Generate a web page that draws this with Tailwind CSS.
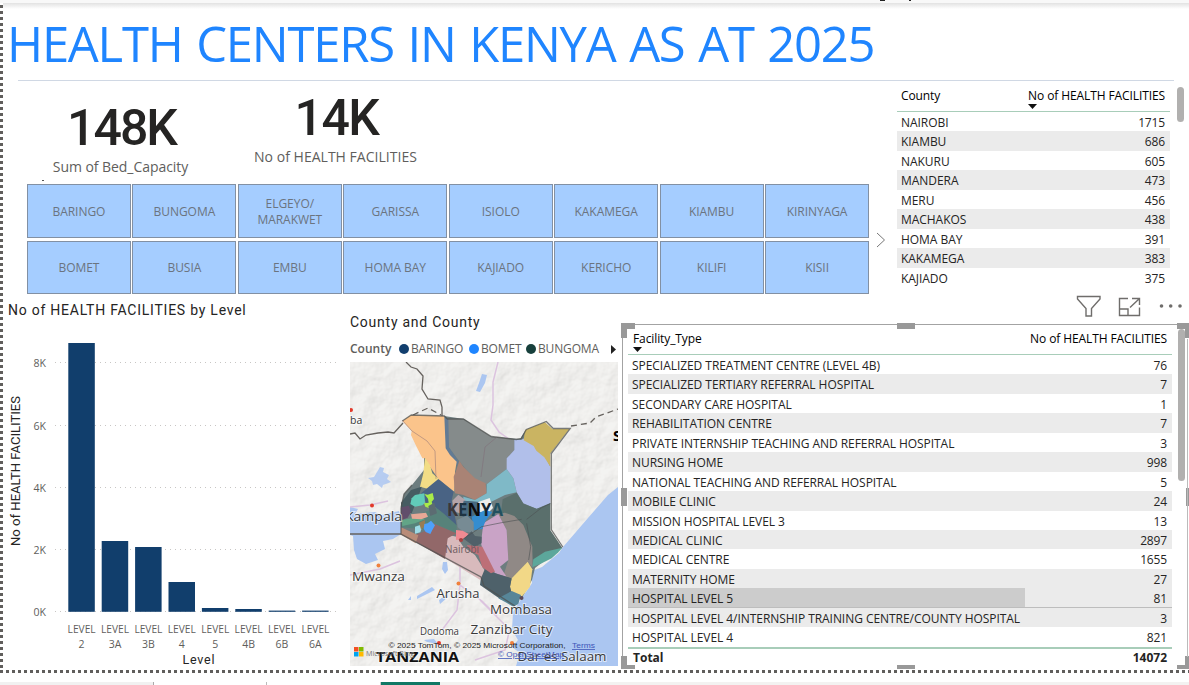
<!DOCTYPE html>
<html lang="en">
<head>
<meta charset="utf-8">
<title>Health Centers in Kenya</title>
<script src="https://cdn.jsdelivr.net/npm/@tailwindcss/browser@4"></script>
</head>
<body class="bg-white font-['Open_Sans',sans-serif] text-[#252423]">
<div class="relative flex h-[685px] w-[1189px] flex-col overflow-hidden bg-white">
  <!-- ribbon edge -->
  <div class="flex h-[3px] shrink-0 bg-[#f8f8f8]"><i class="ml-[880px] h-px w-[5px] bg-[#222]"></i><i class="ml-[24px] h-px w-[2px] bg-[#222]"></i></div>

  <!-- report canvas -->
  <main class="flex h-[667px] shrink-0">
    <div class="mt-[2px] w-[3px] shrink-0 bg-[repeating-linear-gradient(180deg,#605e5c_0_3px,#fff_3px_6px)]"></div>
    <div class="flex w-[1186px] flex-col">
      <div class="h-[6px] shrink-0 bg-linear-to-b from-[#e2e2e2] to-white"></div>
      <h1 class="h-[71px] shrink-0 pl-[4px] text-[49px] leading-[69px] whitespace-nowrap tracking-[-1.25px] [word-spacing:2.2px] text-[#1f85ff]">HEALTH CENTERS IN KENYA AS AT 2025</h1>
      <div class="ml-[15px] h-px w-[1156px] shrink-0 bg-[#d0d8e4]"></div>

      <section class="flex h-[214px] shrink-0">
        <div class="w-[866px] shrink-0 pl-[24px]">
          <div class="flex h-[103px]">
            <div class="flex w-[187px] flex-col items-center pt-[18px]">
              <div class="pl-[2px] text-[50px] leading-[58px] font-medium tracking-[-2px] font-[Roboto,sans-serif]">148K</div>
              <div class="text-[14px] leading-[20px] whitespace-nowrap tracking-[-0.05px] text-[#605e5c] [font-stretch:93%]">Sum of Bed_Capacity</div>
              <i class="mt-[3px] -ml-[156px] h-px w-[2px] bg-[#555]"></i>
            </div>
            <div class="flex w-[243px] flex-col items-center pt-[8px]">
              <div class="pl-[2px] text-[50px] leading-[58px] font-medium tracking-[-1.5px] font-[Roboto,sans-serif]">14K</div>
              <div class="text-[14px] leading-[20px] whitespace-nowrap tracking-[0.02px] text-[#605e5c] [font-stretch:93%]">No of HEALTH FACILITIES</div>
            </div>
          </div>
          <div id="slicer" class="grid h-[110px] w-[842px] grid-cols-8 grid-rows-2 gap-x-[1.6px] gap-y-[3px]"></div>
        </div>
        <div class="w-[28px] shrink-0 pt-[151px] pl-[7px]">
          <svg class="block h-[16px] w-[10px]" viewBox="0 0 10 16" fill="none" stroke="#777"><path d="M1 1l7.500 7-7.500 7"/></svg>
        </div>
        <div class="w-[273px] shrink-0">
          <div class="flex h-[31px] border-b border-[#a8cdb9] text-[12px] leading-[30px] tracking-[-0.1px] text-black [font-stretch:93%]">
            <div class="w-[127px] pl-[4px]">County</div>
            <div class="relative grow pr-[5px] text-right whitespace-nowrap">No of HEALTH FACILITIES
              <svg class="absolute top-[23px] left-[4px] h-[5px] w-[9px]" viewBox="0 0 9 5"><path d="M0 0h9L4.500 5z" fill="#111"/></svg>
            </div>
          </div>
          <div id="counties"></div>
        </div>
        <div class="mt-[6px] ml-[7px] h-[35px] w-[7px] rounded-full bg-[#b1b0af]"></div>
      </section>

      <section class="flex h-[375px] shrink-0">
        <!-- column chart -->
        <div class="w-[347px] shrink-0 pl-[5px]">
          <h2 class="pt-[6px] text-[14px] leading-[18px] whitespace-nowrap tracking-[0.76px] font-[Roboto,sans-serif] [font-stretch:90%]">No of HEALTH FACILITIES by Level</h2>
          <svg id="chart" class="block h-[350px] w-[340px]" viewBox="8 319 340 350"></svg>
        </div>
        <!-- map -->
        <div class="w-[268px] shrink-0">
          <h2 class="pt-[18px] text-[14px] leading-[18px] tracking-[0.75px] font-[Roboto,sans-serif] [font-stretch:90%]">County and County</h2>
          <div class="mt-[8px] flex h-[20px] items-center text-[12px] whitespace-nowrap tracking-[-0.15px] text-[#605e5c] [font-stretch:93%]">
            <b class="w-[49px] font-semibold tracking-normal">County</b>
            <span class="flex w-[70px] items-center gap-[2px]"><i class="size-[10px] rounded-full bg-[#123f6e]"></i>BARINGO</span>
            <span class="flex w-[57px] items-center gap-[2px]"><i class="size-[10px] rounded-full bg-[#1f85ff]"></i>BOMET</span>
            <span class="flex w-[85px] items-center gap-[2px]"><i class="size-[10px] rounded-full bg-[#17403c]"></i>BUNGOMA</span>
            <svg class="h-[9px] w-[5px]" viewBox="0 0 5 9"><path d="M0 0l5 4.500L0 9z" fill="#222"/></svg>
          </div>
          <svg class="mt-[3px] block h-[304px] w-[268px]" viewBox="350 362 268 304" font-family="Open Sans, sans-serif">
            <defs>
              <filter id="relief" x="0" y="0" width="100%" height="100%"><feTurbulence type="fractalNoise" baseFrequency=".05" numOctaves="4" seed="6"/><feDiffuseLighting surfaceScale="1.600" lighting-color="#f3f3f3" diffuseConstant="1.120" color-interpolation-filters="sRGB"><feDistantLight azimuth="225" elevation="62"/></feDiffuseLighting></filter>
            </defs>
            <rect x="350" y="362" width="268" height="304" fill="#efeeeb"/>
            <rect x="350" y="362" width="268" height="304" filter="url(#relief)" opacity=".3"/>
            <!-- water -->
            <g fill="#abc6f1">
              <path d="M618 487L608 495 588 518 563 547 559 553 542 567 532 571 532 583 522 598 513 612 512 630 518 640 512 647 520 653 516 666H618z"/>
              <path d="M350 507l8 2-3 5 20-2 6 3 18-4 2 8v15l-8 5-10 2 2 8-10 5 3 6-12 4-9-5-3-9-1-14-3-1z"/>
              <path d="M482 374l5 1-2 8-5 9-4-1 3-8z"/>
              <path d="M368 478l6-1 3-5 3-5 4 1-1 4 6 3-2 4 4 3-8 3-1 3-5-4-4 1-1-4z" opacity=".85"/>
              <path d="M443 562l4 0 1 8-3 4-3-5zM417 596l15-9 3 3-18 9zM439 600l8-6 1 3-8 7zM424 640l10-1 4 5-11-2zM408 600l3-4 0 4z"/>
            </g>
            <!-- roads -->
            <g fill="none" stroke="#dcc3df" stroke-width="1.500">
              <path d="M498 362l-5 20 0 23-2 15 8 12 10 7M460 535v50l22 16 15 15M350 507l20-2 18-4M350 575l30-6 20-8M460 585l-3 25-15 20M510 628l-5 22-30 10M480 600l28 28"/>
            </g>
            <!-- surrounding borders -->
            <g fill="none" stroke="#66625e" stroke-width="1.300">
              <path d="M406 362l5 5 6 2 6 7-1 13 6 10 12 1 2 7 0 9M350 434l5-1 5 6 6-4 12-2 10-1 6 1 9-10M350 534h51"/>
              <path d="M413 415l15-7 13 7M571 426l19-3 6-6 22-8" stroke-dasharray="6 4"/>
            </g>
            <!-- country base -->
            <path d="M403 421L411 416 444 416 464 419 490 437 520 439 525 431 545 423 552 429 568 429 550 454 550 531 561 548 535 568 532 580 522 598 505 595 482 578 401 534 401 508 404 494 412 485 424 470 424 452 412 430z" fill="#6d7d7f"/>
            <!-- counties -->
            <g transform="translate(395 405) scale(.33333)">
              <path fill="#858b8b" d="M158 42h47l85 53 55 5 13 3v32l-23 25 3 30-63 48-25-3-40-45-20-25-30-40z"/>
              <path fill="#627b95" d="M146 33l14 10 2 84 30 45-10 12-32-52z"/>
              <path fill="#fbc48b" d="M22 48L48 30l100 3 4 97 13 20 20 20-5 30-2 60-48-38-25-37-15-25-8 0-20-40-14-30 2-12z"/>
              <path fill="#f2dd86" d="M90 158l15 22 7 25 23 20-35 27-25-7 10-40z"/>
              <path fill="#a98375" d="M193 167l12 18 35 35 32 15 3 30-35 20-35-15-25-5-4-50 8-20z"/>
              <path fill="#7fb9c7" d="M275 238l60-46 20 28 10 42-35 8-50 25-75-8 0-12 35 10 35-20z"/>
              <path fill="#b1bfea" d="M358 103l20 2 10-5 52 32 26 53v112l-41 15-40-17-20-33-10-42-20-28v-32l23-25z"/>
              <path fill="#cab462" d="M386 106l4-31 60-23 22 20 51 0-57 73v40l-18-28-24-20-8-14z"/>
            </g>
            <g transform="translate(395 480) scale(.33333)">
              <path fill="#5a6f6c" d="M318 100l5-42 42-20 20 33 40 15 41-17v82l36 53-88 37-4-35-25-65-35-35-30-4z"/>
              <path fill="#908986" d="M310 102l20-4 28 10 27 27 27 65v62l-14-17-48 50-25-7 15-48-5-90z"/>
              <path fill="#c9a3c6" d="M265 130l45-28 25 48 5 90-25 20 20 30-35-10-30-40-12-50z"/>
              <path fill="#5ca79b" d="M415 238l35-23 52-12-12 14-20 18-30 15-28 12z"/>
              <path fill="#f2d887" d="M398 245l14 23-7 52-25 30-30-10-5-20 5-25z"/>
              <path fill="#4e616a" d="M258 290l12-22 40 15 40 12-5 25 5 20-30 20-65-45z"/>
              <path fill="#578698" d="M310 355l40-22 28 12-8 27-15 8z"/>
              <path fill="#d8babc" d="M150 200l10-35 25 5 20 30 35 25 28 45-12 30-106-65z"/>
              <path fill="#bd6f77" d="M215 195l47 5 38 75-12 5-26-18-12-37-20-10z"/>
              <path fill="#926869" d="M60 165l40-15 15-20 35 15 35 15-27 15-8 62-90-52z"/>
              <path fill="#b98c78" d="M18 142l52 24-8 24-44-26z"/>
              <path fill="#57827a" d="M20 122l30-7 40-20 45-15 50 55v25l-35-15-35-15-25 18-72-6z"/>
              <path fill="#62a587" d="M20 120l45-8 25 6-30 12-38 8z"/>
              <path fill="#496384" d="M78 40L130-3l46 38-6 26 15 75-40-36-25-20-20 0z"/>
              <path fill="#465c62" d="M18 68L48 30l32-10-10 30-20 50-32-8z"/>
              <path fill="#61cbb9" d="M50 55l10-10 28-5 2 28-8 8-22 4-14-8z"/>
              <path fill="#a9ec49" d="M88 42l10 2 15-5 4 18-7 8 3 10 5 20-8 3-9-14-10-4-4-10 14-2-2-12z"/>
              <path fill="#614e6b" d="M18 82l24-5 6 18-10 18-20 8z"/>
              <path fill="#e7a896" d="M48 103l45-5 6 12-20 8-28-2z"/>
              <path fill="#9ddbe6" d="M60 140l24-8-8 25-16 4z"/>
              <path fill="#977c54" d="M72 128l18-8 0 20-12 8z"/>
              <path fill="#4ea1fb" d="M88 132l10-2 10-8 12 14-8 14-6 12-14-6-6-10z"/>
              <path fill="#5c6c72" d="M100 78l18-10 8 32-20 8z"/>
              <path fill="#b5a4a9" d="M172 62l18-18 18 14 20 30-20 16-32-10z"/>
              <path fill="#496a80" d="M206 62l50 4 10 36-30 24-40-20z"/>
              <path fill="#eeeeec" d="M250 66l34-12 10 30-20 20-24-10z"/>
              <path fill="#348dd0" d="M230 110l40-20 22 6-20 26-10 25-25 4z"/>
              <path fill="#778b94" d="M186 120l30-14 20 20 0 30-30 0-18-14z"/>
              <path fill="#f08a92" d="M183 150l20 2 18 10-12 14-26 4z"/>
              <path fill="#516069" d="M206 176l24-22 10 14 20 2 0 20-22 10z"/>
              <path fill="none" stroke="#4c5053" stroke-width="3" opacity=".6" d="M200 180l60-40 60-12 60-10M395 130l12 70-6 40M395 118l45-35 26-12"/>
            </g>
            <path d="M402.300 421l9-6 33 1 3 3h16l28 17.500 25 3 5-1 5-9 20-8 7 7h17l-19 25v76l11.500 17.500M401 508l3-14 8-9M401 508v26l80 43 3 9 31 20" fill="none" stroke="#4f5150" stroke-width="1.300" opacity=".75"/>
            <path d="M402 420l10 11 15 10 8 10 1 28M497 437l-12 10-4 30" fill="none" stroke="#7e6674" opacity=".45"/>
            <!-- cities -->
            <g fill="#e2392a"><circle cx="351" cy="410" r="2"/><circle cx="372" cy="505.500" r="2"/><circle cx="461" cy="540" r="2" fill="#a84040"/><circle cx="439" cy="643" r="2"/></g>
            <g fill="#f0803c"><circle cx="378.500" cy="565.500" r="2"/><circle cx="458.500" cy="583.500" r="2"/><circle cx="512" cy="643" r="2"/></g><circle cx="521.500" cy="598" r="2" fill="#5c4a58"/>
            <g fill="#3a3a3a" stroke="#fff" stroke-opacity=".6" stroke-width="2" paint-order="stroke">
              <text x="350" y="424" font-size="10.500">ba</text>
              <text x="345" y="521" font-size="13" textLength="57" lengthAdjust="spacingAndGlyphs">Kampala</text>
              <text x="352" y="581" font-size="12.500" textLength="53" lengthAdjust="spacingAndGlyphs">Mwanza</text>
              <text x="436.500" y="598" font-size="13" textLength="43" lengthAdjust="spacingAndGlyphs">Arusha</text>
              <text x="490" y="613.500" font-size="13" textLength="62" lengthAdjust="spacingAndGlyphs">Mombasa</text>
              <text x="420" y="635" font-size="10" textLength="39" lengthAdjust="spacingAndGlyphs">Dodoma</text>
              <text x="470.500" y="634" font-size="13" textLength="82" lengthAdjust="spacingAndGlyphs">Zanzibar City</text>
              <text x="517.500" y="660.500" font-size="13" textLength="89" lengthAdjust="spacingAndGlyphs">Dar es Salaam</text>
            </g>
            <text x="445" y="553" font-size="10.500" fill="#6d5a5e" textLength="34" lengthAdjust="spacingAndGlyphs">Nairobi</text>
            <g font-weight="700">
              <text x="447" y="515.500" font-size="17.500" textLength="56" lengthAdjust="spacingAndGlyphs"><tspan fill="#3b3638">K</tspan><tspan fill="#1f3442">E</tspan><tspan fill="#0c0c0c">N</tspan><tspan fill="#14242e">Y</tspan><tspan fill="#22505f">A</tspan></text>
              <text x="613" y="441" font-size="15" fill="#000">S</text>
              <text x="376" y="661.500" font-size="14.500" fill="#111" stroke="#fff" stroke-opacity=".5" stroke-width="2" paint-order="stroke" textLength="83" lengthAdjust="spacingAndGlyphs">TANZANIA</text>
            </g>
            <g><path fill="#f25022" d="M354 647h4.500v4.500H354z"/><path fill="#7fba00" d="M359 647h4.500v4.500H359z"/><path fill="#00a4ef" d="M354 652h4.500v4.500H354z"/><path fill="#ffb900" d="M359 652h4.500v4.500H359z"/></g>
            <text x="366" y="655.500" font-size="8" fill="#777" textLength="48" lengthAdjust="spacingAndGlyphs">Microsoft Bing</text>
            <g font-family="Liberation Sans, sans-serif" font-size="7.800">
              <text x="388.500" y="648" fill="#222" textLength="177" lengthAdjust="spacingAndGlyphs">© 2025 TomTom, © 2025 Microsoft Corporation,</text>
              <g fill="#3d55b8" text-decoration="underline"><text x="572" y="648" textLength="23" lengthAdjust="spacingAndGlyphs">Terms</text><text x="498" y="657" textLength="66" lengthAdjust="spacingAndGlyphs">© OpenStreetMap</text></g>
            </g>
          </svg>
        </div>

        <!-- facility type table, selected -->
        <div class="w-[571px] shrink-0 pl-[4px]">
          <div class="flex h-[29px] pl-[454px]">
            <svg class="block h-[28px] w-[112px]" viewBox="1076 295 112 28" fill="none" stroke="#6f6d6b" stroke-width="1.400">
              <path d="M1077.500 296.500h22.500v2.500l-8.500 9.500v7.500h-5.500v-7.500l-8.500-9.500z"/>
              <path d="M1128 298.500h-8.500v17h20v-8M1119.500 309h8.500v6.500M1130 307.500l9.500-9M1132 298.500h7.500v6.500"/>
              <g fill="#6f6d6b" stroke="none"><circle cx="1161.500" cy="306" r="1.800"/><circle cx="1170.700" cy="306" r="1.800"/><circle cx="1180" cy="306" r="1.800"/></g>
            </svg>
          </div>
          <div class="relative h-[345px] w-[566px] border-t border-l border-[#a3a3a3] pt-[4px] pl-[5px]">
            <i class="absolute -top-[2px] -left-[2px] h-[15px] w-[14px] border-t-[6px] border-l-[6px] border-[#999]"></i>
            <i class="absolute -top-[2px] left-[274px] h-[6px] w-[18px] bg-[#999]"></i>
            <i class="absolute -top-[2px] left-[554px] h-[15px] w-[14px] border-t-[6px] border-r-[6px] border-[#999]"></i>
            <i class="absolute top-[163px] -left-[2px] h-[18px] w-[6px] bg-[#999]"></i>
            <i class="absolute top-[163px] left-[563px] h-[18px] w-[6px] bg-[#999]"></i>
            <i class="absolute top-[331px] -left-[2px] h-[13px] w-[14px] border-b-[4px] border-l-[6px] border-[#999]"></i>
            <i class="absolute top-[340px] left-[274px] h-[4px] w-[18px] bg-[#999]"></i>
            <i class="absolute top-[331px] left-[554px] h-[13px] w-[14px] border-r-[6px] border-b-[4px] border-[#999]"></i>
            <i class="absolute top-[14px] left-[564px] h-[318px] w-px bg-[#bbb]"></i>
            <div class="flex">
              <div class="w-[544px]">
                <div class="flex h-[26px] border-b border-[#a8cdb9] text-[12px] leading-[19px] whitespace-nowrap tracking-[-0.1px] text-black [font-stretch:93%]">
                  <div class="relative w-[397px] pl-[5px]">Facility_Type
                    <svg class="absolute top-[18px] left-[5px] h-[5px] w-[9px]" viewBox="0 0 9 5"><path d="M0 0h9L4.500 5z" fill="#111"/></svg>
                  </div>
                  <div class="grow pr-[5px] text-right">No of HEALTH FACILITIES</div>
                </div>
                <div id="types"></div>
                <div class="flex h-[22px] justify-between border-t-2 border-[#a8cdb9] pr-[5px] pl-[5px] text-[12px] leading-[18px] font-bold [font-stretch:93%]"><span>Total</span><span>14072</span></div>
              </div>
              <div class="ml-[6px] h-[152px] w-[7px] rounded-full bg-[#b1b0af]"></div>
            </div>
          </div>
        </div>
      </section>
    </div>
  </main>
  <div class="h-[3px] shrink-0 bg-[repeating-linear-gradient(90deg,#605e5c_0_3px,#fff_3px_6px)]"></div>
  <!-- page tabs -->
  <div class="mt-[9px] flex h-[3px] shrink-0">
    <div class="w-[154px] border-r border-[#aaa] bg-[#f1f1f1]"></div>
    <div class="w-[113px] border-r border-[#bbb]"></div>
    <div class="w-[114px] border-r border-[#ccc]"></div>
    <div class="w-[59px] bg-[#117865]"></div>
    <div class="grow bg-[#f3f2f1]"></div>
  </div>
</div>
<script>
const slicer = ['BARINGO','BUNGOMA','ELGEYO/<br>MARAKWET','GARISSA','ISIOLO','KAKAMEGA','KIAMBU','KIRINYAGA','BOMET','BUSIA','EMBU','HOMA BAY','KAJIADO','KERICHO','KILIFI','KISII'];
document.getElementById('slicer').innerHTML = slicer.map(s =>
  `<div class="flex items-center justify-center border border-[#8290a3] bg-[#a5cdff] pt-[2px] text-center text-[12px] leading-[16px] tracking-[-0.05px] text-[#6b7480] [font-stretch:93%]">${s}</div>`).join('');

const row = (name, n, band, first, hot) =>
  `<div class="flex h-[19.45px] text-[12px] leading-[22px] whitespace-nowrap ${band ? 'bg-[#ebebeb]' : ''} ${hot ? 'border-b border-[#bdbdbd] bg-[#e4e4e4]' : ''}">
    <div class="${first} tracking-[-0.05px] [font-stretch:93%] ${hot ? 'bg-[#cccccc]' : ''}">${name}</div>
    <div class="grow pr-[5px] text-right tracking-[-0.15px] [font-stretch:93%]">${n}</div></div>`;

document.getElementById('counties').innerHTML =
  [['NAIROBI',1715],['KIAMBU',686],['NAKURU',605],['MANDERA',473],['MERU',456],['MACHAKOS',438],['HOMA BAY',391],['KAKAMEGA',383],['KAJIADO',375]]
  .map((r, i) => row(r[0], r[1], i % 2, 'w-[127px] pl-[4px]', false)).join('');

document.getElementById('types').innerHTML =
  [['SPECIALIZED TREATMENT CENTRE (LEVEL 4B)',76],['SPECIALIZED TERTIARY REFERRAL HOSPITAL',7],['SECONDARY CARE HOSPITAL',1],['REHABILITATION CENTRE',7],['PRIVATE INTERNSHIP TEACHING AND REFERRAL HOSPITAL',3],['NURSING HOME',998],['NATIONAL TEACHING AND REFERRAL HOSPITAL',5],['MOBILE CLINIC',24],['MISSION HOSPITAL LEVEL 3',13],['MEDICAL CLINIC',2897],['MEDICAL CENTRE',1655],['MATERNITY HOME',27],['HOSPITAL LEVEL 5',81],['HOSPITAL LEVEL 4/INTERNSHIP TRAINING CENTRE/COUNTY HOSPITAL',3],['HOSPITAL LEVEL 4',821]]
  .map((r, i) => row(r[0], r[1], i % 2 || i === 12, 'w-[397px] pl-[4px]', i === 12)).join('');

let c = '<g font-family="Open Sans, sans-serif" font-size="10.500" fill="#605e5c">';
[['8K',362.5],['6K',425.5],['4K',487.5],['2K',549.5],['0K',611.5]].forEach(([t, y]) => {
  c += `<text x="46" y="${y + 4}" text-anchor="end" textLength="12.500" lengthAdjust="spacingAndGlyphs">${t}</text><path d="M55 ${y}H339" stroke="#c8c6c4" stroke-dasharray="1 4"/>`;
});
[['2',343],['3A',541],['3B',547],['4',582],['5',608],['4B',609],['6B',610.6],['6A',610.6]].forEach(([t, y], i) => {
  const x = 68.3 + i * 33.4;
  c += `<rect x="${x}" y="${y}" width="26.500" height="${611.8 - y}" fill="#113e6c"/><text x="${x - .7}" y="633" textLength="28" lengthAdjust="spacingAndGlyphs">LEVEL</text><text x="${x + 13.3}" y="648" text-anchor="middle">${t}</text>`;
});
c += '</g><g font-family="Roboto, sans-serif" fill="#252423"><text x="182.500" y="664" font-size="12.500" textLength="32">Level</text><text transform="translate(20 546) rotate(-90)" font-size="12.500" textLength="150" lengthAdjust="spacingAndGlyphs">No of HEALTH FACILITIES</text></g>';
document.getElementById('chart').innerHTML = c;
</script>
</body>
</html>
